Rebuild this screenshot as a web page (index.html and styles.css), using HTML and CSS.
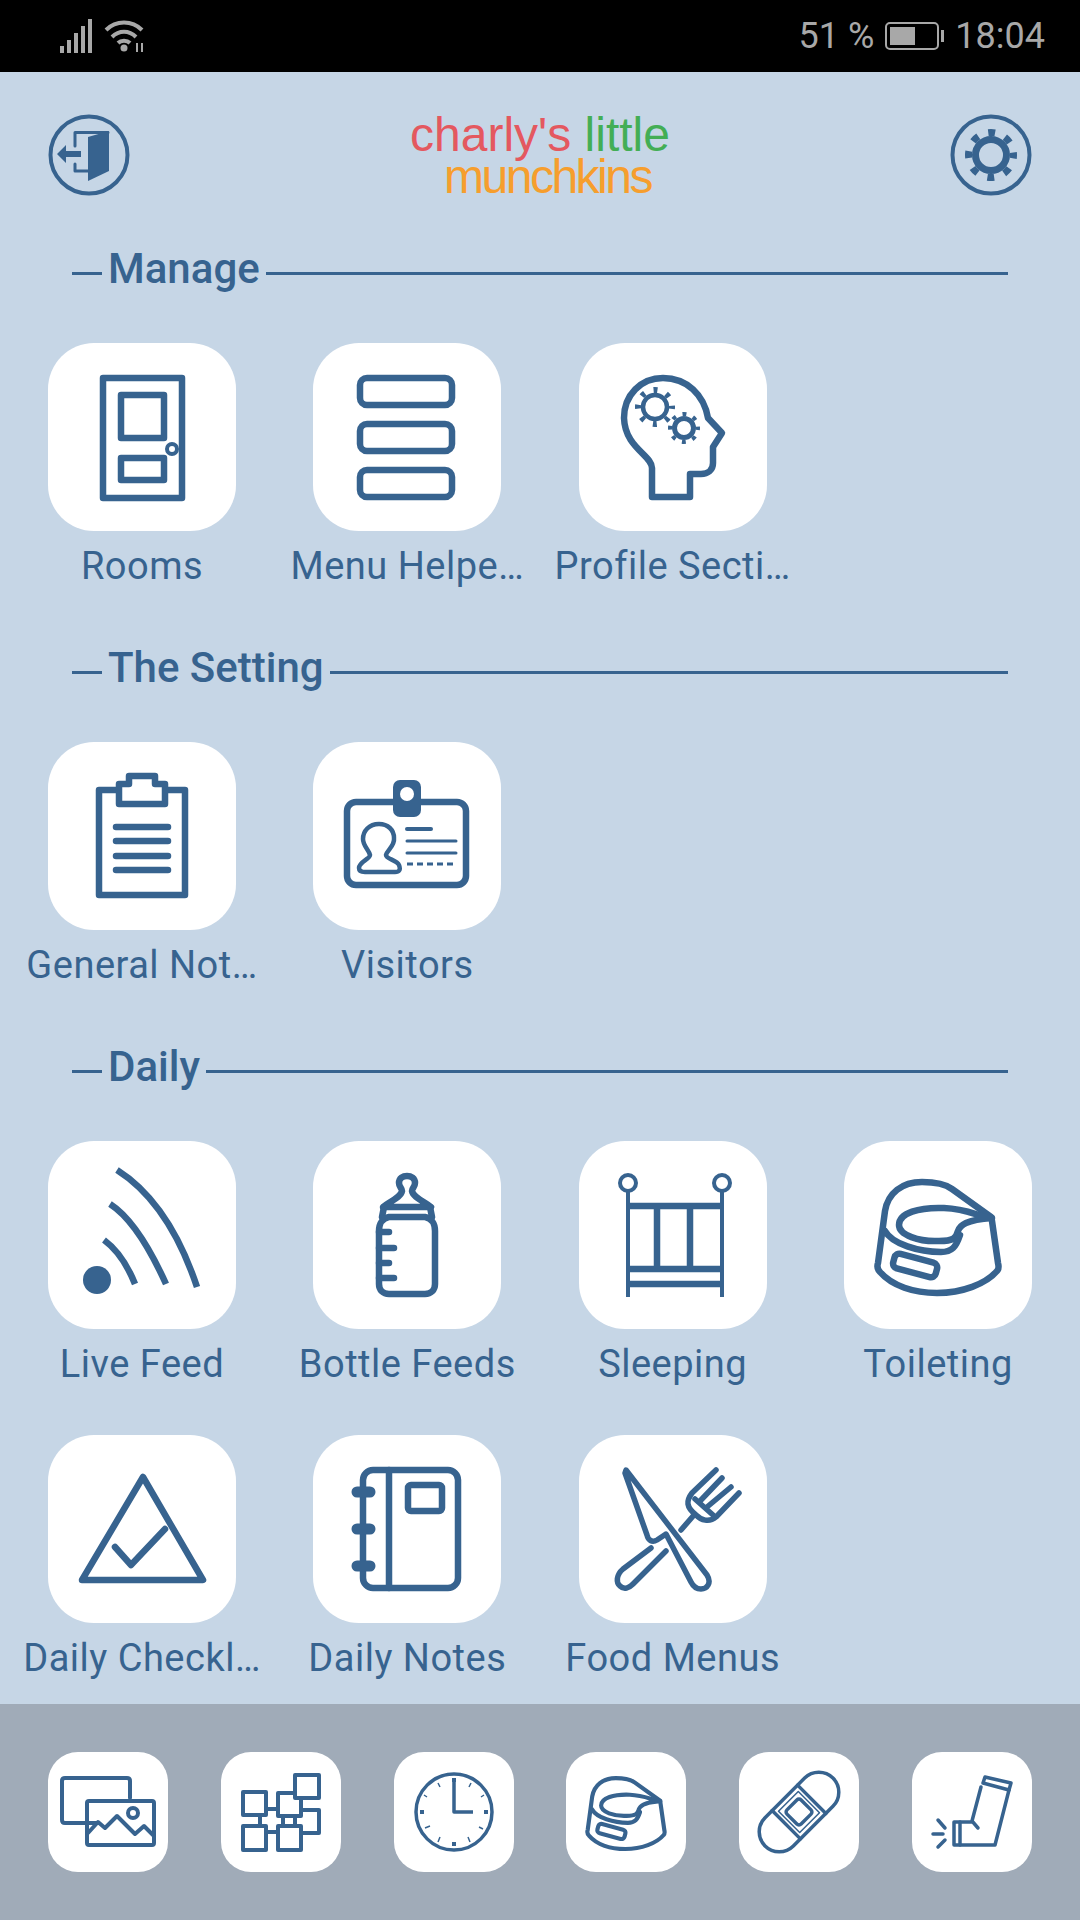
FILE: index.html
```html
<!DOCTYPE html>
<html lang="en">
<head>
    <meta charset="UTF-8">
    <meta name="viewport" content="width=device-width, initial-scale=1.0">
    <title>Charly's Little Munchkins</title>
    <link rel="stylesheet" href="styles.css">
</head>
<body>
    <!-- shared potty drawing, used in the Daily grid and in the bottom bar -->
    <svg class="defs" width="0" height="0">
        <symbol id="potty" viewBox="0 0 188 188">
            <path d="M147 76L108 48C100 42 90 41 78 41C58 41 44 52 41 70L34 122C33 125 33 128 36 131C48 145 70 152 93 152C118 152 142 143 153 130C155 128 155 126 154 122L148 80Z"/>
            <path d="M148 77C135 76 125 68 100 67C75 66 55 72 55 84C55 94 75 101 95 100C110 100 112 97 114 90C116 84 122 79 148 77Z"/>
            <path d="M41 90C48 103 75 111 97 111C108 111 112 106 116 94"/>
            <rect x="49" y="117" width="44" height="15" rx="5" transform="rotate(15 71 125)"/>
        </symbol>
    </svg>

    <div class="status-bar">
        <div class="status-group">
            <svg class="signal" width="34" height="34" viewBox="0 0 34 34">
                <rect x="0" y="27" width="4" height="7"/>
                <rect x="7" y="21" width="4" height="13"/>
                <rect x="14" y="14" width="4" height="20"/>
                <rect x="21" y="7" width="4" height="27"/>
                <rect x="28" y="0" width="4" height="34"/>
            </svg>
            <svg class="wifi" width="40" height="34" viewBox="0 0 40 34">
                <path d="M2 11C12 1 28 1 38 11"/>
                <path d="M8 18C15 11 25 11 32 18"/>
                <path d="M14 24C17 21 23 21 26 24"/>
                <circle class="wifi-dot" cx="20" cy="29" r="3.5"/>
                <path class="wifi-arrows" d="M33 24V33M38 24V33"/>
            </svg>
        </div>
        <div class="status-group status-right">
            <span>51 %</span>
            <div class="battery"><div class="battery-fill"></div></div>
            <span>18:04</span>
        </div>
    </div>

    <main class="content">
        <header class="top-bar">
            <button class="round-btn">
                <svg class="ico" width="82" height="82" viewBox="0 0 82 82">
                    <circle cx="41" cy="41" r="38.5" stroke-width="4"/>
                    <path stroke-width="3" d="M27 32V18.5H60M27 50V57H40"/>
                    <path class="solid" d="M40 23L61 17V57L40 67Z"/>
                    <path class="solid" d="M9 40L18 31V37H33V43H18V49Z"/>
                </svg>
            </button>
            <div class="logo">
                <div class="logo-line"><span class="logo-red">charly's</span> <span class="logo-green">little</span></div>
                <div class="logo-line logo-orange">munchkins</div>
            </div>
            <button class="round-btn">
                <svg class="ico" width="82" height="82" viewBox="0 0 82 82">
                    <circle cx="41" cy="41" r="38.5" stroke-width="4"/>
                    <circle cx="41" cy="41" r="15.5" stroke-width="7"/>
                    <circle class="flat" cx="41" cy="41" r="22.5" stroke-width="7" stroke-dasharray="7 10.67" stroke-dashoffset="3.5"/>
                </svg>
            </button>
        </header>

        <section class="section">
            <h2 class="section-title"><span>Manage</span></h2>
            <div class="tile-grid">
                <div class="tile-item">
                    <div class="tile">
                        <svg class="ico" viewBox="0 0 188 188">
                            <rect x="55" y="35" width="79" height="120"/>
                            <rect x="73" y="52" width="43" height="43"/>
                            <rect x="73" y="115" width="43" height="22"/>
                            <circle class="white" cx="124" cy="106" r="5" stroke-width="4"/>
                        </svg>
                    </div>
                    <div class="tile-label">Rooms</div>
                </div>
                <div class="tile-item">
                    <div class="tile">
                        <svg class="ico" viewBox="0 0 188 188">
                            <rect x="47" y="35" width="92" height="27" rx="7"/>
                            <rect x="47" y="81" width="92" height="27" rx="7"/>
                            <rect x="47" y="127" width="92" height="27" rx="7"/>
                        </svg>
                    </div>
                    <div class="tile-label">Menu Helpe…</div>
                </div>
                <div class="tile-item">
                    <div class="tile">
                        <svg class="ico" viewBox="0 0 188 188">
                            <path d="M73 154V125C73 112 46 105 45 75C45 52 62 35 84 35C108 35 125 52 129 75L143 90L134 104V120C134 127 129 131 122 131H111V154Z"/>
                            <circle cx="76" cy="64" r="12" stroke-width="4.5"/>
                            <circle class="flat" cx="76" cy="64" r="17" stroke-width="6" stroke-dasharray="4 9.35" stroke-dashoffset="2"/>
                            <circle cx="105" cy="85" r="9.5" stroke-width="5"/>
                            <circle class="flat" cx="105" cy="85" r="14" stroke-width="4" stroke-dasharray="4 7" stroke-dashoffset="2"/>
                        </svg>
                    </div>
                    <div class="tile-label">Profile Secti…</div>
                </div>
            </div>
        </section>

        <section class="section">
            <h2 class="section-title"><span>The Setting</span></h2>
            <div class="tile-grid">
                <div class="tile-item">
                    <div class="tile">
                        <svg class="ico" viewBox="0 0 188 188">
                            <path d="M68 48H51V153H137V48H120"/>
                            <path d="M71 62V42H81V34H107V42H117V62Z"/>
                            <path d="M68 85H120M68 99H120M68 114H120M68 128H120"/>
                        </svg>
                    </div>
                    <div class="tile-label">General Not…</div>
                </div>
                <div class="tile-item">
                    <div class="tile">
                        <svg class="ico" viewBox="0 0 188 188">
                            <rect x="34" y="60" width="119" height="83" rx="9"/>
                            <rect class="solid" x="80" y="38" width="28" height="37" rx="7"/>
                            <circle class="hole" cx="94" cy="52" r="7"/>
                            <path stroke-width="4.5" d="M66 82C56 82 50 89 50 97C50 104 56 108 57 113C57 117 46 120 46 126C46 130 50 130 52 130H82C86 130 88 128 86 123C84 118 73 117 73 113C74 108 82 104 81 96C81 88 75 82 66 82Z"/>
                            <path stroke-width="4" d="M94 87H118"/>
                            <path stroke-width="3" d="M94 99H143M94 111H143"/>
                            <path class="flat" stroke-width="3" stroke-dasharray="6 4" d="M94 122H143"/>
                        </svg>
                    </div>
                    <div class="tile-label">Visitors</div>
                </div>
            </div>
        </section>

        <section class="section">
            <h2 class="section-title"><span>Daily</span></h2>
            <div class="tile-grid">
                <div class="tile-item">
                    <div class="tile">
                        <svg class="ico butt" viewBox="0 0 188 188">
                            <circle class="solid" cx="49" cy="139" r="14"/>
                            <path d="M69 29Q121 62 149 146"/>
                            <path d="M62 63Q90 81 118 143"/>
                            <path d="M56 99Q75 113 87 143"/>
                        </svg>
                    </div>
                    <div class="tile-label">Live Feed</div>
                </div>
                <div class="tile-item">
                    <div class="tile">
                        <svg class="ico" viewBox="0 0 188 188">
                            <path d="M70 66C78 60 88 56 89 50C89 47 86 46 86 42C86 37 90 35 94 35C98 35 102 37 102 42C102 46 99 47 99 50C100 56 110 60 118 66Z"/>
                            <path d="M71 66L69 76M117 66L119 76"/>
                            <path d="M66 90C66 82 70 77 76 76H112C118 77 122 82 122 90V143C122 149 118 153 112 153H76C70 153 66 149 66 143Z"/>
                            <path d="M66 91H76M66 107H81M66 122H76M66 137H81"/>
                        </svg>
                    </div>
                    <div class="tile-label">Bottle Feeds</div>
                </div>
                <div class="tile-item">
                    <div class="tile">
                        <svg class="ico butt" viewBox="0 0 188 188">
                            <circle cx="49" cy="42" r="8" stroke-width="4"/>
                            <circle cx="143" cy="42" r="8" stroke-width="4"/>
                            <path stroke-width="4" d="M49 50V156M143 50V156"/>
                            <path d="M49 65H143M49 128H143M49 143H143M78 65V128M111 65V128"/>
                        </svg>
                    </div>
                    <div class="tile-label">Sleeping</div>
                </div>
                <div class="tile-item">
                    <div class="tile">
                        <svg class="ico"><use href="#potty"/></svg>
                    </div>
                    <div class="tile-label">Toileting</div>
                </div>
            </div>
            <div class="tile-grid">
                <div class="tile-item">
                    <div class="tile">
                        <svg class="ico" viewBox="0 0 188 188">
                            <path d="M95 42L155 145H34Z"/>
                            <path d="M67 112L83 130L117 94"/>
                        </svg>
                    </div>
                    <div class="tile-label">Daily Checkl…</div>
                </div>
                <div class="tile-item">
                    <div class="tile">
                        <svg class="ico" viewBox="0 0 188 188">
                            <rect x="50" y="35" width="95" height="118" rx="10"/>
                            <path d="M76 35V153"/>
                            <rect x="95" y="50" width="34" height="26" rx="3"/>
                            <path stroke-width="11" d="M44 57H57M44 94H57M44 131H57"/>
                        </svg>
                    </div>
                    <div class="tile-label">Daily Notes</div>
                </div>
                <div class="tile-item">
                    <div class="tile">
                        <svg class="ico" viewBox="0 0 188 188">
                            <path stroke-width="5.5" d="M47 35L128 140C133 148 128 154 122 154C117 154 114 151 112 147L87 99L78 105C73 108 69 105 68 100L46 38Z"/>
                            <path stroke-width="5.5" d="M72 113L44 134C37 140 37 148 41 151C45 155 50 153 54 149L87 116"/>
                            <path stroke-width="5.5" d="M102 95L115 80"/>
                            <path stroke-width="5.5" d="M137 35L113 58C107 66 107 72 117 80C122 85 130 88 137 82L160 58M143 43L122 65M152 52L128 72M116 64L134 80"/>
                        </svg>
                    </div>
                    <div class="tile-label">Food Menus</div>
                </div>
            </div>
        </section>
    </main>

    <nav class="bottom-bar">
        <div class="tile tile-small">
            <svg class="ico s4" viewBox="0 0 120 120">
                <path d="M50 71H17C15 71 14 70 14 68V29C14 27 15 26 17 26H79C81 26 82 27 82 29V46"/>
                <rect x="39" y="49" width="67" height="44" rx="2"/>
                <path d="M40 81L50 70L57 76L69 64L87 82L96 74L106 84"/>
                <circle cx="85" cy="61" r="5"/>
            </svg>
        </div>
        <div class="tile tile-small">
            <svg class="ico s4" viewBox="0 0 120 120">
                <rect class="white" x="39" y="57" width="23" height="23"/>
                <rect class="white" x="74" y="58" width="24" height="23"/>
                <rect class="white" x="22" y="40" width="23" height="23"/>
                <rect class="white" x="22" y="74" width="23" height="24"/>
                <rect class="white" x="57" y="41" width="23" height="23"/>
                <rect class="white" x="57" y="74" width="23" height="24"/>
                <rect class="white" x="74" y="23" width="24" height="23"/>
            </svg>
        </div>
        <div class="tile tile-small">
            <svg class="ico butt s3" viewBox="0 0 120 120">
                <circle cx="60" cy="60" r="38" stroke-width="3.5"/>
                <path d="M60 28V60H79"/>
                <path stroke-width="4" d="M60 26V30M60 90V94M26 60H30M90 60H94"/>
                <path stroke-width="1.5" d="M77 31L75 35M90 43L87 45M89 77L85 75M76 90L74 85M44 90L46 85M31 76L36 74M30 43L33 45M44 31L46 35"/>
            </svg>
        </div>
        <div class="tile tile-small">
            <svg class="ico"><use href="#potty"/></svg>
        </div>
        <div class="tile tile-small">
            <svg class="ico s3" viewBox="0 0 120 120">
                <g transform="rotate(-45 60 60)">
                    <rect x="12" y="40" width="96" height="40" rx="20"/>
                    <path d="M42 40V80M78 40V80"/>
                    <rect x="50" y="50" width="20" height="20" rx="3"/>
                    <rect x="46" y="45" width="28" height="30" stroke-width="1.5"/>
                </g>
            </svg>
        </div>
        <div class="tile tile-small">
            <svg class="ico s3" viewBox="0 0 120 120">
                <path d="M73 25L99 31L97 38L71 31Z"/>
                <path d="M69 35L60 69L66 76M97 38L83 93H42V70H60"/>
                <path d="M48 70V93"/>
                <path d="M26 68L33 76M21 82H31M26 95L33 88"/>
            </svg>
        </div>
    </nav>
</body>
</html>
```

FILE: styles.css
```css
* {
    box-sizing: border-box;
}

body {
    font-family: Roboto, 'Liberation Sans', sans-serif;
    margin: 0;
    width: 1080px;
    height: 1920px;
    display: flex;
    flex-direction: column;
    background-color: #c6d6e6;
    color: #37638f;
    overflow: hidden;
}

.defs {
    position: absolute;
}

/* phone status bar */
.status-bar {
    height: 72px;
    flex-shrink: 0;
    background-color: #000000;
    color: #a8a8a8;
    display: flex;
    justify-content: space-between;
    align-items: center;
    padding: 0 35px 0 60px;
    font-size: 36px;
}

.status-group {
    display: flex;
    align-items: center;
    gap: 10px;
}

.status-right {
    gap: 11px;
}

.signal {
    fill: #a8a8a8;
}

.wifi {
    fill: none;
    stroke: #a8a8a8;
    stroke-width: 4;
}

.wifi-dot {
    fill: #a8a8a8;
    stroke: none;
}

.wifi-arrows {
    stroke-width: 2;
}

.battery {
    width: 54px;
    height: 28px;
    border: 2px solid #a8a8a8;
    border-radius: 5px;
    padding: 3px;
    position: relative;
    margin-right: 5px;
}

.battery::after {
    content: "";
    position: absolute;
    right: -7px;
    top: 6px;
    width: 3px;
    height: 12px;
    background-color: #a8a8a8;
}

.battery-fill {
    width: 55%;
    height: 100%;
    background-color: #a8a8a8;
}

.content {
    flex: 1;
    overflow: hidden;
}

.top-bar {
    display: flex;
    justify-content: space-between;
    align-items: flex-start;
    padding: 42px 48px 0;
    height: 179px;
}

.round-btn {
    width: 82px;
    height: 82px;
    padding: 0;
    border: none;
    background: none;
}

.logo {
    text-align: center;
    font-family: 'Liberation Sans', sans-serif;
    font-size: 48px;
    line-height: 42px;
}

.logo-red {
    color: #e4585f;
}

.logo-green {
    color: #43ae55;
}

.logo-orange {
    color: #f69e2d;
    margin-left: 15px;
    letter-spacing: -2.5px;
}

.section {
    margin-bottom: 61px;
}

/* heading with a rule running through it */
.section-title {
    display: flex;
    align-items: center;
    gap: 6px;
    height: 44px;
    margin: 0 72px 48px;
    font-size: 42px;
    font-weight: 500;
    line-height: 44px;
}

.section-title span {
    margin-top: -8px;
}

.section-title::before,
.section-title::after {
    content: "";
    height: 3px;
    background-color: #37638f;
}

.section-title::before {
    width: 30px;
}

.section-title::after {
    flex: 1;
}

.tile-grid {
    display: grid;
    grid-template-columns: repeat(4, 188px);
    justify-content: space-between;
    padding: 0 48px;
    margin-bottom: 48px;
}

.tile-grid:last-child {
    margin-bottom: 0;
}

.tile {
    width: 188px;
    height: 188px;
    border-radius: 46px;
    background-color: #ffffff;
}

.tile-label {
    width: 248px;
    margin: 13px -30px 1px;
    font-size: 38px;
    letter-spacing: 0.5px;
    line-height: 44px;
    text-align: center;
    white-space: nowrap;
}

.bottom-bar {
    height: 216px;
    flex-shrink: 0;
    background-color: #a0abb8;
    display: flex;
    justify-content: space-between;
    padding: 48px 48px 0;
}

.tile-small {
    width: 120px;
    height: 120px;
    border-radius: 30px;
}

/* line icons */
.ico {
    display: block;
    width: 100%;
    height: 100%;
    fill: none;
    stroke: #37638f;
    stroke-width: 6.5;
    stroke-linecap: round;
    stroke-linejoin: round;
}

.ico.butt,
.ico .flat {
    stroke-linecap: butt;
}

.ico.s4 {
    stroke-width: 4;
}

.ico.s3 {
    stroke-width: 3.5;
}

.ico .solid {
    fill: #37638f;
    stroke: none;
}

.ico .hole {
    fill: #ffffff;
    stroke: none;
}

.ico .white {
    fill: #ffffff;
}
```
